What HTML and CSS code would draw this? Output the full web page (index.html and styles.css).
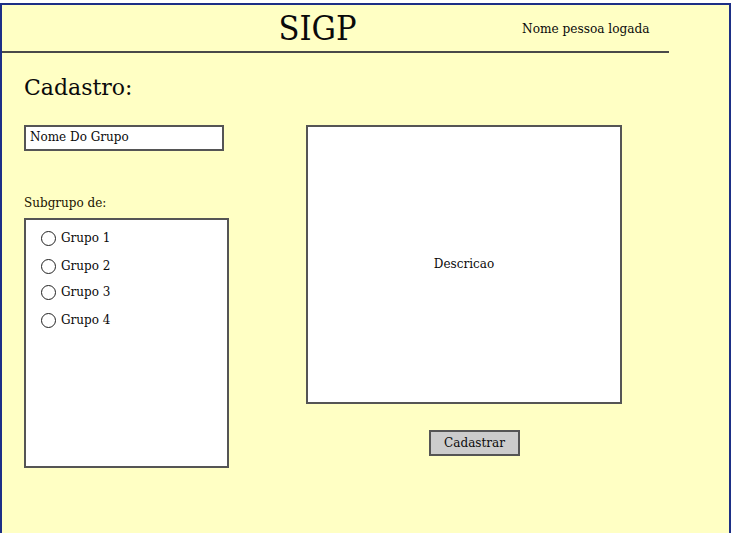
FILE: index.html
```html
<!DOCTYPE html>
<html>
<head>
<meta charset="utf-8">
<link rel="stylesheet" href="styles.css">
</head>
<body>
<div class="frame">
  <header class="top">
    <div class="title">SIGP</div>
    <div class="user">Nome pessoa logada</div>
  </header>
  <main class="content">
    <h1 class="heading">Cadastro:</h1>
    <div class="columns">
      <div class="left">
        <div class="field">Nome Do Grupo</div>
        <div class="label">Subgrupo de:</div>
        <div class="list">
          <div class="opt opt1"><span class="radio"></span>Grupo 1</div>
          <div class="opt opt2"><span class="radio"></span>Grupo 2</div>
          <div class="opt opt3"><span class="radio"></span>Grupo 3</div>
          <div class="opt opt4"><span class="radio"></span>Grupo 4</div>
        </div>
      </div>
      <div class="right">
        <div class="desc">Descricao</div>
        <div class="btnrow"><div class="btn">Cadastrar</div></div>
      </div>
    </div>
  </main>
</div>
</body>
</html>
```

FILE: styles.css
```css
html, body {
  margin: 0;
  padding: 0;
  background: #ffffff;
  overflow: hidden;
}
body {
  font-family: "DejaVu Serif", serif;
  color: #0a0a0a;
  height: 533px;
  padding-top: 3px;
  box-sizing: border-box;
}
.frame {
  background: #ffffc4;
  border: 2px solid #1d2f86;
  border-bottom: none;
  height: 530px;
  width: 731px;
  box-sizing: border-box;
  overflow: hidden;
}
.top {
  width: 667px;
  height: 46px;
  border-bottom: 2px solid #4a4a4a;
  position: relative;
  display: flex;
  align-items: center;
}
.title {
  font-family: "DejaVu Serif Condensed", "DejaVu Serif", serif;
  font-stretch: condensed;
  font-size: 34px;
  width: 100%;
  text-align: center;
  margin-left: -18px;
  margin-top: 0px;
}
.user {
  position: absolute;
  left: 520px;
  top: 15px;
  font-family: "DejaVu Serif Condensed", "DejaVu Serif", serif;
  font-stretch: condensed;
  font-size: 13.5px;
  white-space: nowrap;
}
.content {
  padding: 0 0 0 22px;
}
.heading {
  font-weight: normal;
  font-size: 22px;
  margin: 0;
  padding-top: 22px;
  height: 50px;
}
.columns {
  display: flex;
  gap: 78px;
}
.left {
  width: 204px;
}
.field {
  width: 200px;
  height: 26px;
  box-sizing: border-box;
  background: #fff;
  border: 2px solid #555;
  font-size: 12px;
  padding: 3px 0 0 4px;
}
.label {
  font-size: 12px;
  margin-top: 45px;
  height: 22px;
  color: #1a1200;
}
.list {
  width: 205px;
  height: 250px;
  box-sizing: border-box;
  background: #fff;
  border: 2px solid #555;
  padding-top: 8px;
}
.opt {
  display: flex;
  align-items: center;
  font-size: 12px;
  padding-left: 15px;
  height: 20px;
}
.opt2 { margin-top: 8px; }
.opt3 { margin-top: 6px; }
.opt4 { margin-top: 8px; }
.radio {
  width: 13px;
  height: 13px;
  border: 1.5px solid #222;
  border-radius: 50%;
  background: #fff;
  margin-right: 5px;
}
.right {
  width: 316px;
}
.desc {
  width: 316px;
  height: 279px;
  box-sizing: border-box;
  background: #fff;
  border: 2px solid #555;
  display: flex;
  align-items: center;
  justify-content: center;
  font-size: 12px;
  padding-bottom: 1px;
}
.btnrow {
  display: flex;
  padding-left: 123px;
  margin-top: 26px;
}
.btn {
  width: 91px;
  height: 26px;
  box-sizing: border-box;
  background: #cccccc;
  border: 2px solid #555;
  font-size: 12px;
  display: flex;
  align-items: center;
  justify-content: center;
}
```
